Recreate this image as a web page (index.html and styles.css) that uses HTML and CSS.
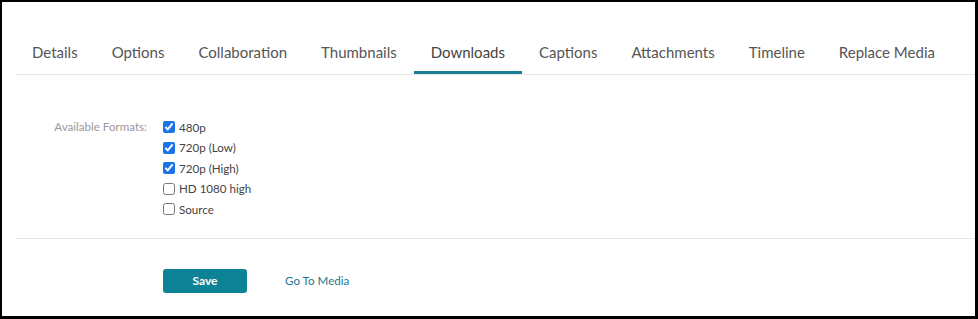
FILE: index.html
```html
<!DOCTYPE html>
<html lang="en">
<head>
  <meta charset="UTF-8" />
  <title>Edit Media - Downloads</title>
  <link rel="stylesheet" href="styles.css">
</head>
<body>
  <div class="marco">
    <ul class="pestanas">
      <li><a href="#">Details</a></li>
      <li><a href="#">Options</a></li>
      <li><a href="#">Collaboration</a></li>
      <li><a href="#">Thumbnails</a></li>
      <li class="activa"><a href="#">Downloads</a></li>
      <li><a href="#">Captions</a></li>
      <li><a href="#">Attachments</a></li>
      <li><a href="#">Timeline</a></li>
      <li><a href="#">Replace Media</a></li>
    </ul>

    <form class="formulario">
      <div class="fila">
        <span class="etiqueta">Available Formats:</span>
        <div class="opciones">
          <label><input type="checkbox" checked> 480p</label>
          <label><input type="checkbox" checked> 720p (Low)</label>
          <label><input type="checkbox" checked> 720p (High)</label>
          <label><input type="checkbox"> HD 1080 high</label>
          <label><input type="checkbox"> Source</label>
        </div>
      </div>

      <div class="acciones">
        <button type="button" class="guardar">Save</button>
        <a href="#" class="enlace">Go To Media</a>
      </div>
    </form>
  </div>
</body>
</html>
```

FILE: styles.css
```css
* {
  box-sizing: border-box;
}

html, body {
  margin: 0;
  height: 100%;
}

body {
  font-family: Lato, 'Open Sans', sans-serif;
  background: #000;
  padding: 2px 3px 3px 2px;
}

.marco {
  background: #fff;
  height: 100%;
  padding: 40px 0 0 14px;
}

.pestanas {
  list-style: none;
  margin: 0;
  padding: 0;
  display: flex;
  border-bottom: 1px solid #e6e6e6;
}

.pestanas li {
  padding: 0 17px 10px;
  border-bottom: 3px solid transparent;
}

.pestanas li:first-child {
  padding-left: 16px;
}

.pestanas a {
  font-size: 15px;
  color: #555;
  text-decoration: none;
}

.pestanas li.activa {
  border-bottom-color: #1a7f96;
}

.pestanas li.activa a {
  color: #444;
}

.formulario {
  padding-top: 42px;
}

.fila {
  display: grid;
  grid-template-columns: 131px 1fr;
  column-gap: 16px;
  padding-bottom: 18px;
  border-bottom: 1px solid #e6e6e6;
}

.etiqueta {
  text-align: right;
  font-size: 11.6px;
  color: #999;
  line-height: 20px;
}

.opciones label {
  display: flex;
  align-items: center;
  height: 20.5px;
  font-size: 11.6px;
  color: #444;
}

.opciones input {
  margin: 0 4px 0 0;
  width: 12px;
  height: 12px;
  accent-color: #1a73e8;
}

.acciones {
  display: flex;
  align-items: center;
  padding: 30px 0 0 147px;
  gap: 38px;
}

.guardar {
  width: 84px;
  height: 24px;
  background: #0e8296;
  border: none;
  border-radius: 3px;
  color: #fff;
  font-family: inherit;
  font-weight: bold;
  font-size: 12px;
}

.enlace {
  color: #1a7894;
  text-decoration: none;
  font-size: 11.6px;
}
```
